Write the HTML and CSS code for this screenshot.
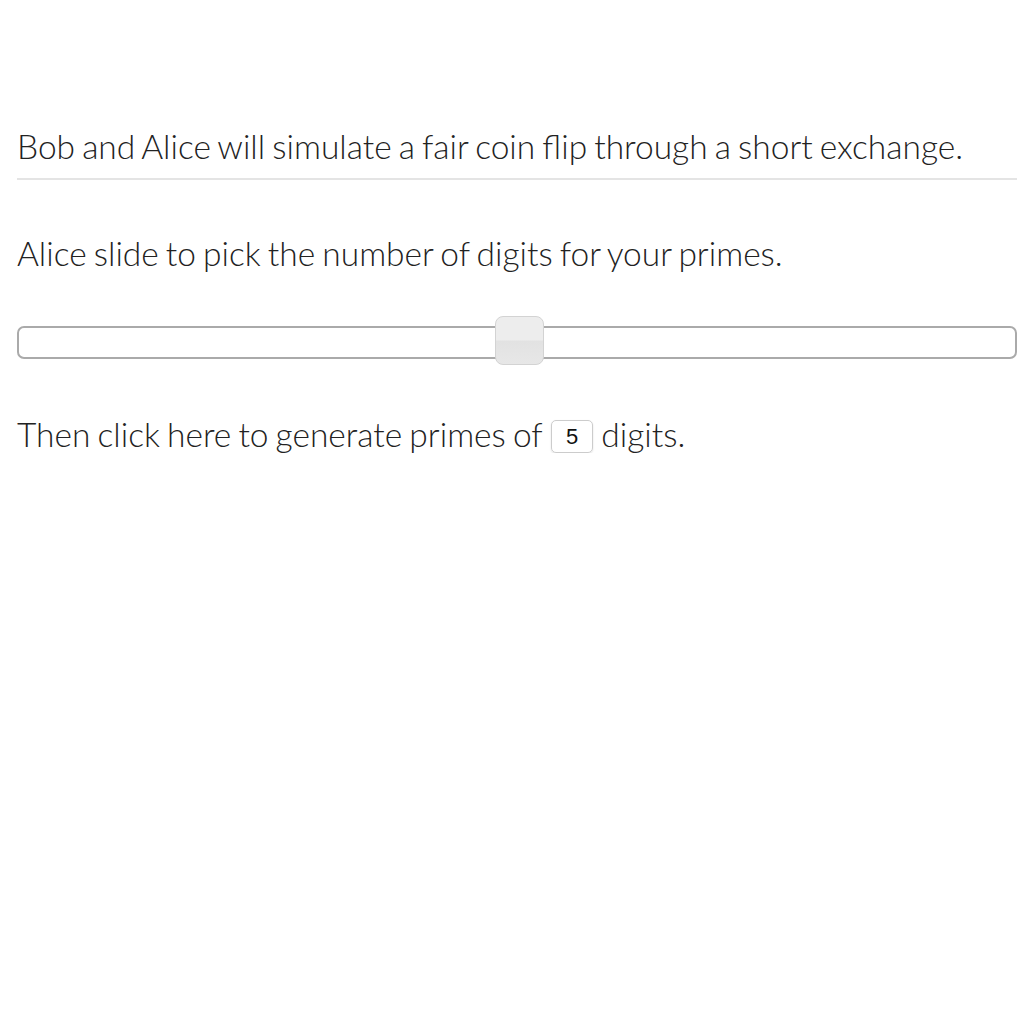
FILE: index.html
```html
<!DOCTYPE html>
<html>
<head>
<meta charset="utf-8">
<link rel="stylesheet" href="styles.css">
</head>
<body>
<main class="page">
  <p class="line lead">Bob and Alice will simulate a fair coin flip through a short exchange.</p>
  <hr class="rule">
  <p class="line prompt">Alice slide to pick the number of digits for your primes.</p>
  <div class="slider">
    <span class="handle"></span>
  </div>
  <p class="line action">Then click here to generate primes of <span class="badge">5</span> digits.</p>
</main>
</body>
</html>
```
FILE: styles.css
```css
html, body {
  margin: 0;
  padding: 0;
  background: #fff;
}
.page {
  width: 1000px;
  margin-left: 17px;
  padding-top: 127px;
  font-family: Lato, "Open Sans", sans-serif;
  font-weight: 300;
  color: #222;
}
.line {
  margin: 0;
  font-size: 33.5px;
  line-height: 38px;
  word-spacing: -2px;
  white-space: nowrap;
}
.rule {
  border: 0;
  height: 2px;
  background: #e4e4e4;
  margin: 13px 0 0 0;
}
.prompt {
  margin-top: 54px;
}
.slider {
  position: relative;
  margin-top: 54px;
  height: 33px;
  box-sizing: border-box;
  border: 2px solid #aaa;
  border-radius: 7px;
  background: #fff;
}
.handle {
  position: absolute;
  top: -12px;
  left: 476px;
  width: 49px;
  height: 49px;
  box-sizing: border-box;
  border: 1px solid #d3d3d3;
  border-radius: 8px;
  background: linear-gradient(#ededed 0%, #ededed 48%, #e2e2e2 52%, #e7e7e7 100%);
}
.action {
  margin-top: 56px;
}
.badge {
  display: inline-block;
  box-sizing: border-box;
  width: 42px;
  height: 33px;
  margin: 0 1px 0 2px;
  border: 1px solid #ccc;
  border-radius: 5px;
  box-shadow: 0 1px 2px rgba(0,0,0,0.12);
  font-family: "Liberation Sans", Arial, sans-serif;
  font-weight: 400;
  font-size: 22px;
  line-height: 31px;
  word-spacing: 0;
  text-align: center;
  color: #111;
  vertical-align: 3px;
}
```
